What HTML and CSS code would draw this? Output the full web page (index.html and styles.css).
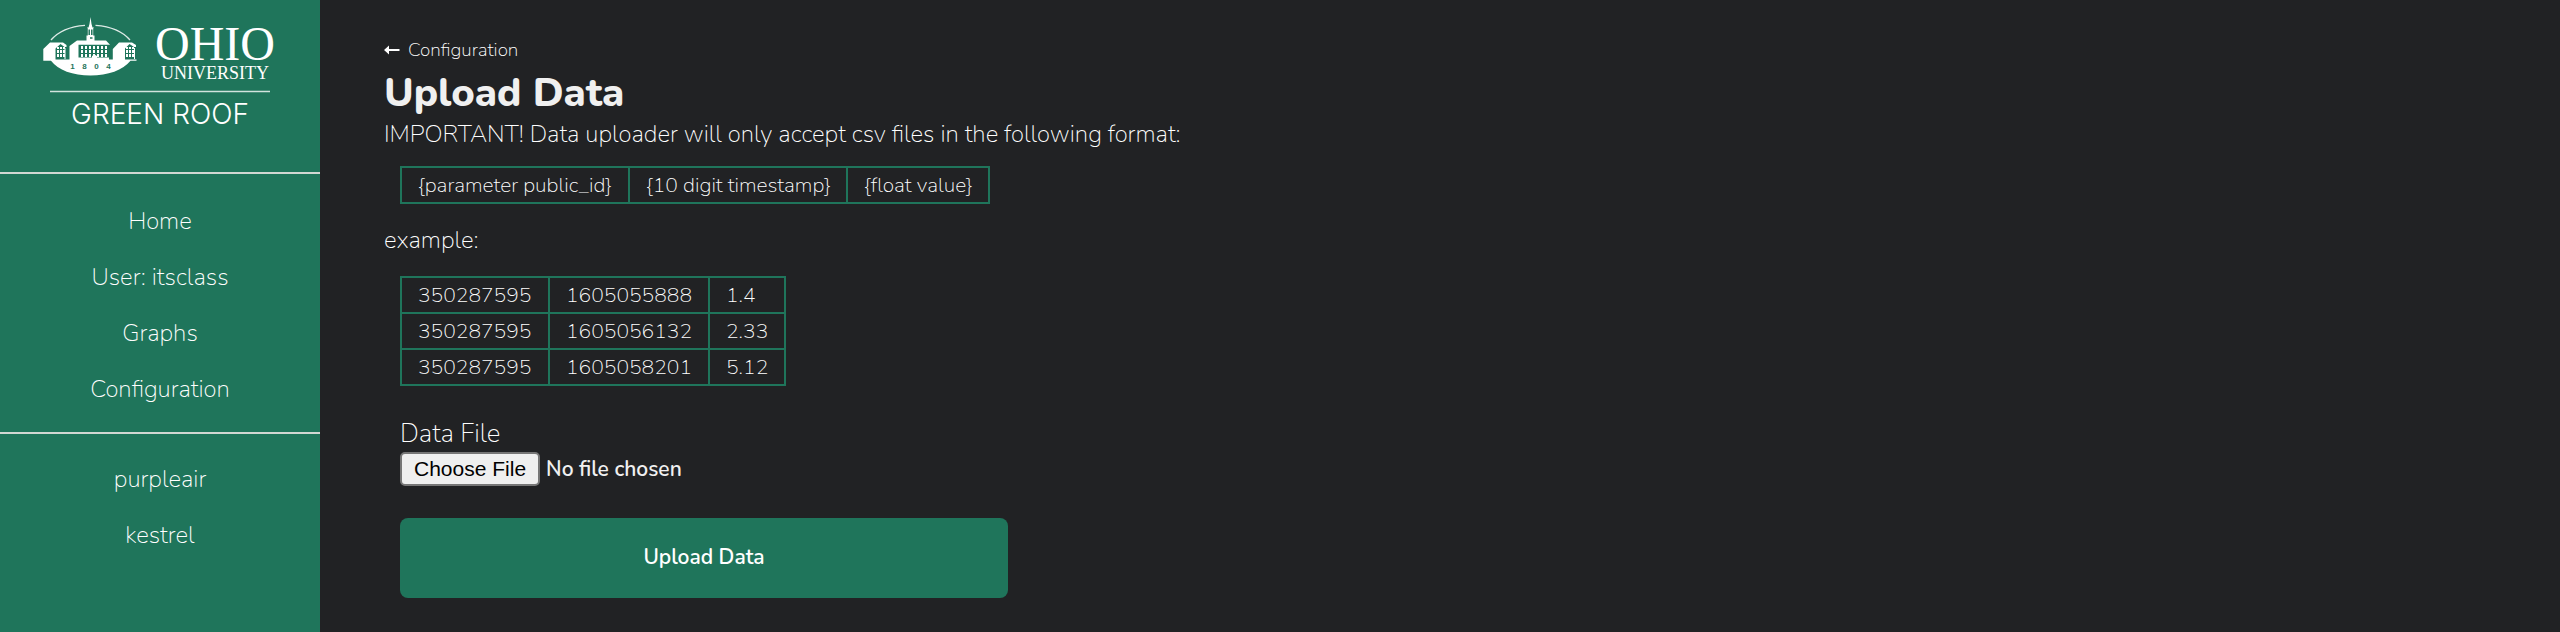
FILE: index.html
```html
<!DOCTYPE html>
<html lang="en">
<head>
<meta charset="utf-8">
<meta name="viewport" content="width=device-width, initial-scale=1">
<title>Upload Data</title>
<link rel="stylesheet" href="styles.css">
</head>
<body>
<div class="app">
  <aside class="sidebar">
    <header class="brand">
      <svg class="logo" viewBox="40 14 240 120" role="img" aria-label="Ohio University Green Roof">
        <defs>
          <pattern id="panes" width="4" height="4" patternUnits="userSpaceOnUse" x="80" y="46">
            <rect x="1" y="0" width="2" height="3" fill="#fff"/>
          </pattern>
          <pattern id="side-panes" width="3" height="4" patternUnits="userSpaceOnUse" x="57" y="46">
            <rect width="2" height="3" fill="#fff"/>
          </pattern>
        </defs>
        <path d="M51 40Q62 27 85 25.300M95.500 25.300Q119 27 130 40" fill="none" stroke="#fff" stroke-width="1.300" stroke-opacity=".85"/>
        <path d="M43.300 60.700V49L50 42.500H63L66.500 45V47H64.500L60.500 44L55.500 48.500V59.500H69.500V46L77 40.500H86.500V35.500H87.800V28.500L87 27.500H88.500L89.500 24L90.500 17L91.500 24L92.500 27.500H94L93.200 28.500V35.500H94.500V40.500H106L110 44.800H78.500V59.500H112.800V49L119 42.500H132L136 45V47H134L129.500 44L125 48.500V59.500H136.500V60.700H130.500C123 70 108 75.500 90.500 75.500C73 75.500 58 70 51 60.700Z" fill="#fff"/>
        <path d="M89.200 29.500V35M91.800 29.500V35M90 38H92.500" stroke="#1f755b" stroke-width="1.500"/>
        <rect x="80" y="46" width="28" height="11" fill="url(#panes)"/>
        <path d="M92 60V56L94.500 54.500L97 56V60ZM78 57.500H92V60H78ZM97 57.500H109V60H97Z" fill="#fff"/>
        <path d="M56.500 48L60.500 45L65 48V58.500H56.500ZM126 48L130 45L134.500 48V58.500H126Z" fill="#1f755b"/>
        <rect x="57" y="47" width="8" height="11" fill="url(#side-panes)"/>
        <rect x="126" y="47" width="8" height="11" fill="url(#side-panes)"/>
        <path d="M65 48V59M134.500 48V59" stroke="#fff"/>
        <g class="logo-year">
          <text x="72.500" y="69">1</text><text x="84.500" y="69">8</text><text x="96.500" y="69">0</text><text x="108.500" y="69">4</text>
        </g>
        <text class="logo-name" x="215" y="60">OHIO</text>
        <text class="logo-sub" x="215" y="79">UNIVERSITY</text>
        <path d="M50 91.500H270" stroke="#fff" stroke-opacity=".8" stroke-width="1.300"/>
        <text class="logo-site" x="160" y="124">GREEN ROOF</text>
      </svg>
    </header>
    <nav class="nav nav-main" aria-label="Main">
      <a href="#">Home</a>
      <a href="#">User: itsclass</a>
      <a href="#">Graphs</a>
      <a href="#">Configuration</a>
    </nav>
    <nav class="nav" aria-label="Sensors">
      <a href="#">purpleair</a>
      <a href="#">kestrel</a>
    </nav>
  </aside>
  <main class="content">
    <a class="back" href="#">
      <svg class="arrow" viewBox="0 0 16 12" aria-hidden="true"><path d="M0 6L5 1.500V5H15.500V7H5V10.500Z" fill="currentColor"/></svg>
      Configuration
    </a>
    <h1>Upload Data</h1>
    <p>IMPORTANT! Data uploader will only accept csv files in the following format:</p>
    <table class="format">
      <colgroup><col class="c-param"><col class="c-time"><col class="c-value"></colgroup>
      <tbody><tr><td>{parameter public_id}</td><td>{10 digit timestamp}</td><td>{float value}</td></tr></tbody>
    </table>
    <p>example:</p>
    <table class="sample">
      <colgroup><col class="c-param"><col class="c-time"><col class="c-value"></colgroup>
      <tbody>
        <tr><td>350287595</td><td>1605055888</td><td>1.4</td></tr>
        <tr><td>350287595</td><td>1605056132</td><td>2.33</td></tr>
        <tr><td>350287595</td><td>1605058201</td><td>5.12</td></tr>
      </tbody>
    </table>
    <form class="upload">
      <label for="data-file">Data File</label>
      <input id="data-file" type="file" accept=".csv">
      <button type="button">Upload Data</button>
    </form>
  </main>
</div>
</body>
</html>
```
FILE: styles.css
```css
:root {
  --green: #1f755b;
  --dark: #212224;
  --text: #fff;
  --text-strong: #f0f0f0;
  --sans: Nunito, Lato, sans-serif;
}

* { box-sizing: border-box; }

body {
  margin: 0;
  background: var(--dark);
  color: var(--text);
  font: 200 24px/32px var(--sans);
}

a { color: inherit; text-decoration: none; }

.app { display: flex; min-height: 100vh; }

.sidebar { flex: none; width: 320px; background: var(--green); }

.brand { padding: 14px 40px 38px; }

.logo { display: block; width: 100%; }
.logo text { fill: #fff; text-anchor: middle; }
.logo .logo-year text { fill: var(--green); font: 700 8px "Liberation Sans", sans-serif; }
.logo .logo-name { font: 400 48px "Liberation Serif", serif; }
.logo .logo-sub { font: 400 18px "Liberation Serif", serif; }
.logo .logo-site { font: 300 28px Inter, sans-serif; }

.nav {
  display: flex;
  flex-direction: column;
  padding: 17px 0;
  border-top: 2px solid #d2d8d3;
  text-align: center;
}
.nav-main { padding: 19px 0 15px; }
.nav a { line-height: 56px; }

.content { flex: 1; padding: 32px 64px; }

.back { display: inline-flex; align-items: center; gap: 8px; font-size: 19px; line-height: 28px; }
.arrow { width: 16px; height: 12px; }

h1 {
  margin: 4px 0 0;
  color: var(--text-strong);
  font-size: 40px;
  font-weight: 800;
  line-height: 50px;
}

p { margin: 0; }

table {
  margin: 16px;
  border-collapse: collapse;
  table-layout: fixed;
  font-size: 21px;
  line-height: 34px;
}
td { padding: 0 16px; border: 2px solid var(--green); white-space: nowrap; }

.format { width: 590px; margin-bottom: 20px; }
.format .c-param { width: 228px; }
.format .c-time { width: 218px; }
.sample { width: 386px; margin-top: 20px; }
.sample .c-param { width: 148px; }
.sample .c-time { width: 160px; }

.upload {
  display: flex;
  flex-direction: column;
  max-width: 640px;
  padding: 16px;
}
.upload label { margin-bottom: 2px; font-size: 26px; line-height: 32px; }
.upload input {
  color: var(--text-strong);
  font: 600 21px/34px var(--sans);
}
.upload input::file-selector-button {
  height: 34px;
  margin: 0 6px 0 0;
  padding: 0 12px;
  border: 2px solid #767676;
  border-radius: 5px;
  background: #efefef;
  color: #000;
  font: 400 21px "Liberation Sans", Arial, sans-serif;
}
.upload button {
  height: 80px;
  margin-top: 32px;
  padding-bottom: 4px;
  border: 0;
  border-radius: 8px;
  background: var(--green);
  color: #fff;
  font: 600 21px var(--sans);
}
```
